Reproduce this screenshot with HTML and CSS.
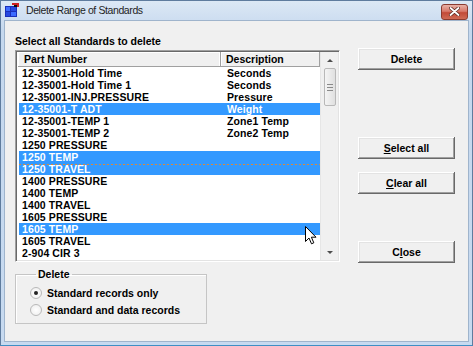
FILE: index.html
```html
<!DOCTYPE html>
<html lang="en">
<head>
  <meta charset="UTF-8">
  <title>Delete Range of Standards</title>
  <link rel="stylesheet" href="styles.css">
</head>
<body>

  <div class="window">

    <!-- Title bar -->
    <div class="titlebar">
      <svg class="app-icon" width="15" height="14" viewBox="0 0 15 14">
        <rect x="0" y="3" width="12" height="11" fill="#1a2fb8"/>
        <rect x="1" y="4" width="4" height="4" fill="#3d6bff"/>
        <rect x="6" y="4" width="5" height="4" fill="#2748e0"/>
        <rect x="1" y="9" width="4" height="4" fill="#2748e0"/>
        <rect x="6" y="9" width="5" height="4" fill="#3d6bff"/>
        <rect x="7" y="0" width="7" height="2" fill="#d02020"/>
        <rect x="9" y="2" width="3" height="2" fill="#101010"/>
        <rect x="12" y="1" width="2" height="3" fill="#d02020"/>
      </svg>
      <span class="title">Delete Range of Standards</span>
      <div class="close-btn">
        <svg width="11" height="9" viewBox="0 0 11 9">
          <path d="M1.5 1 L9.5 8 M9.5 1 L1.5 8" stroke="#5b2a22" stroke-width="3.4" stroke-linecap="round"/>
          <path d="M1.5 1 L9.5 8 M9.5 1 L1.5 8" stroke="#fff" stroke-width="1.8" stroke-linecap="round"/>
        </svg>
      </div>
    </div>

    <!-- Client area -->
    <div class="client">
      <div class="left-col">
        <div class="caption">Select all Standards to delete</div>

        <div class="listbox">
          <div class="list-main">
            <div class="list-head">
              <div class="head-cell part">Part Number</div>
              <div class="head-cell desc">Description</div>
            </div>
            <div class="rows">
              <div class="row"><span>12-35001-Hold Time</span><span>Seconds</span></div>
              <div class="row"><span>12-35001-Hold Time 1</span><span>Seconds</span></div>
              <div class="row"><span>12-35001-INJ.PRESSURE</span><span>Pressure</span></div>
              <div class="row sel"><span>12-35001-T ADT</span><span>Weight</span></div>
              <div class="row"><span>12-35001-TEMP 1</span><span>Zone1 Temp</span></div>
              <div class="row"><span>12-35001-TEMP 2</span><span>Zone2 Temp</span></div>
              <div class="row"><span>1250 PRESSURE</span><span></span></div>
              <div class="row sel"><span>1250 TEMP</span><span></span></div>
              <div class="row sel focus"><span>1250 TRAVEL</span><span></span></div>
              <div class="row"><span>1400 PRESSURE</span><span></span></div>
              <div class="row"><span>1400 TEMP</span><span></span></div>
              <div class="row"><span>1400 TRAVEL</span><span></span></div>
              <div class="row"><span>1605 PRESSURE</span><span></span></div>
              <div class="row sel"><span>1605 TEMP</span><span></span></div>
              <div class="row"><span>1605 TRAVEL</span><span></span></div>
              <div class="row"><span>2-904 CIR 3</span><span></span></div>
            </div>
          </div>
          <div class="scrollbar">
            <div class="sb-btn"><span class="arrow up"></span></div>
            <div class="sb-thumb"><span></span><span></span><span></span></div>
            <div class="sb-track"></div>
            <div class="sb-btn"><span class="arrow down"></span></div>
          </div>
        </div>

        <fieldset class="group">
          <legend>Delete</legend>
          <label class="radio-row"><span class="radio checked"></span>Standard records only</label>
          <label class="radio-row"><span class="radio"></span>Standard and data records</label>
        </fieldset>
      </div>

      <div class="right-col">
        <div class="btn btn-delete">Delete</div>
        <div class="btn btn-select"><u>S</u>elect all</div>
        <div class="btn btn-clear"><u>C</u>lear all</div>
        <div class="btn btn-close">C<u>l</u>ose</div>
      </div>
    </div>

    <!-- mouse pointer -->
    <svg class="cursor" width="12" height="19" viewBox="0 0 12 19">
      <path d="M0.5 0.5 L0.5 15.5 L4 12 L6.5 17.8 L8.8 16.8 L6.4 11.2 L11 11.2 Z" fill="#fff" stroke="#000" stroke-width="1" stroke-linejoin="round"/>
    </svg>
  </div>

</body>
</html>
```

FILE: styles.css
```css
body {
  margin: 0;
  background-color: #c7daf0;
  font-family: "Liberation Sans", Arial, sans-serif;
}

.window {
  position: relative;
  width: 473px;
  height: 346px;
  box-sizing: border-box;
  border: 1px solid #5f7c9e;
  border-bottom-color: #3f8fc4;
  background: linear-gradient(#dce8f5, #c5d8ee 30px, #c7daf0);
  padding: 0 3px 3px 3px;
  display: flex;
  flex-direction: column;
}

/* title bar */
.titlebar {
  height: 19px;
  display: flex;
  align-items: center;
  padding-left: 1px;
}

.app-icon {
  margin-top: -2px;
}

.title {
  margin-left: 6px;
  font-size: 10.5px;
  letter-spacing: -0.4px;
  color: #1e1e1e;
  margin-top: -1px;
}

.close-btn {
  margin-left: auto;
  margin-right: 1px;
  margin-top: 2px;
  width: 25px;
  height: 14px;
  border: 1px solid #8b3b30;
  border-radius: 3px;
  background: linear-gradient(#e8b2a7, #d8786a 45%, #c24a38 55%, #cf6a55);
  display: flex;
  align-items: center;
  justify-content: center;
}

/* client area */
.client {
  flex: 1;
  background-color: #f0f0f0;
  border: 1px solid #9fb4cc;
  display: flex;
  padding-left: 10px;
  font-size: 10.5px;
  font-weight: bold;
  color: #000;
}

.left-col {
  width: 325px;
  display: flex;
  flex-direction: column;
}

.caption {
  margin-top: 14px;
  height: 13px;
  line-height: 13px;
  margin-bottom: 2px;
}

.listbox {
  height: 212px;
  box-sizing: border-box;
  border: 1px solid;
  border-color: #a0a0a0 #ffffff #ffffff #a0a0a0;
  box-shadow: inset 1px 1px 0 #696969, inset -1px -1px 0 #e3e3e3;
  background-color: #fff;
  padding: 1px;
  display: flex;
}

.list-main {
  width: 304px;
  display: flex;
  flex-direction: column;
}

.list-head {
  height: 15px;
  box-sizing: border-box;
  display: flex;
  background-color: #f0f0f0;
  border-bottom: 1px solid #a0a0a0;
  margin-left: 1px;
}

.head-cell {
  line-height: 14px;
  box-sizing: border-box;
}

.head-cell.part {
  width: 203px;
  padding-left: 6px;
  border-right: 1px solid #a0a0a0;
  box-shadow: inset -1px 0 0 #fff, inset 1px 1px 0 #fff;
}

.head-cell.desc {
  flex: 1;
  padding-left: 5px;
  border-right: 1px solid #a0a0a0;
  box-shadow: inset 1px 1px 0 #fff;
}

.rows {
  padding-left: 2px;
}

.row {
  height: 12px;
  line-height: 12px;
  display: flex;
  padding-left: 3px;
  letter-spacing: 0.1px;
}

.row span:first-child {
  width: 205px;
}

.row.sel {
  background-color: #3399ff;
  color: #fff;
}

/* dashed focus line */
.row.focus {
  background-image: repeating-linear-gradient(90deg, #d98a3c 0 2px, transparent 2px 4px);
  background-size: 100% 1px;
  background-position: 0 1px;
  background-repeat: no-repeat;
}

.scrollbar {
  width: 17px;
  display: flex;
  flex-direction: column;
  background-color: #f0f0f0;
  border-left: 1px solid #e6e6e6;
}

.sb-btn {
  height: 16px;
  display: flex;
  align-items: center;
  justify-content: center;
}

.arrow {
  width: 0;
  height: 0;
  border-left: 3px solid transparent;
  border-right: 3px solid transparent;
}

.arrow.up {
  border-bottom: 3px solid #4d4d4d;
}

.arrow.down {
  border-top: 3px solid #4d4d4d;
}

.sb-thumb {
  height: 38px;
  margin: 0 2px 0 3px;
  box-sizing: border-box;
  border: 1px solid #b8b8b8;
  border-radius: 2px;
  background: linear-gradient(90deg, #f4f4f4, #e0e0e0);
  display: flex;
  flex-direction: column;
  align-items: center;
  justify-content: center;
  gap: 2px;
}

.sb-thumb span {
  width: 6px;
  height: 1px;
  background-color: #8a8a8a;
}

.sb-track {
  flex: 1;
}

/* group box */
.group {
  margin: 6px 0 0 0;
  padding: 0 0 0 14px;
  width: 192px;
  height: 56px;
  box-sizing: border-box;
  border: 1px solid #c5c5c5;
  box-shadow: inset 1px 1px 0 #fff;
}

.group legend {
  padding: 0 2px;
  margin-left: 6px;
  line-height: 13px;
}

.radio-row {
  display: flex;
  align-items: center;
  height: 17px;
}

.radio-row:first-of-type {
  margin-top: 3px;
}

.radio {
  width: 10px;
  height: 10px;
  border-radius: 50%;
  border: 1px solid #b9b9b9;
  background: radial-gradient(#ffffff, #ececec);
  margin-right: 5px;
  display: flex;
  align-items: center;
  justify-content: center;
}

.radio.checked::after {
  content: "";
  width: 4px;
  height: 4px;
  border-radius: 50%;
  background-color: #222;
}

/* buttons */
.right-col {
  margin-left: 18px;
  width: 97px;
  display: flex;
  flex-direction: column;
}

.btn {
  height: 22px;
  line-height: 22px;
  text-align: center;
  background-color: #f0f0f0;
  box-shadow: inset -1px -1px 0 #696969, inset 1px 1px 0 #fff, inset -2px -2px 0 #a0a0a0, inset 2px 2px 0 #e3e3e3;
}

.btn-delete {
  margin-top: 27px;
}

.btn-select {
  margin-top: 67px;
}

.btn-clear {
  margin-top: 13px;
}

.btn-close {
  margin-top: 47px;
}

.cursor {
  position: absolute;
  left: 304px;
  top: 225px;
}
```
